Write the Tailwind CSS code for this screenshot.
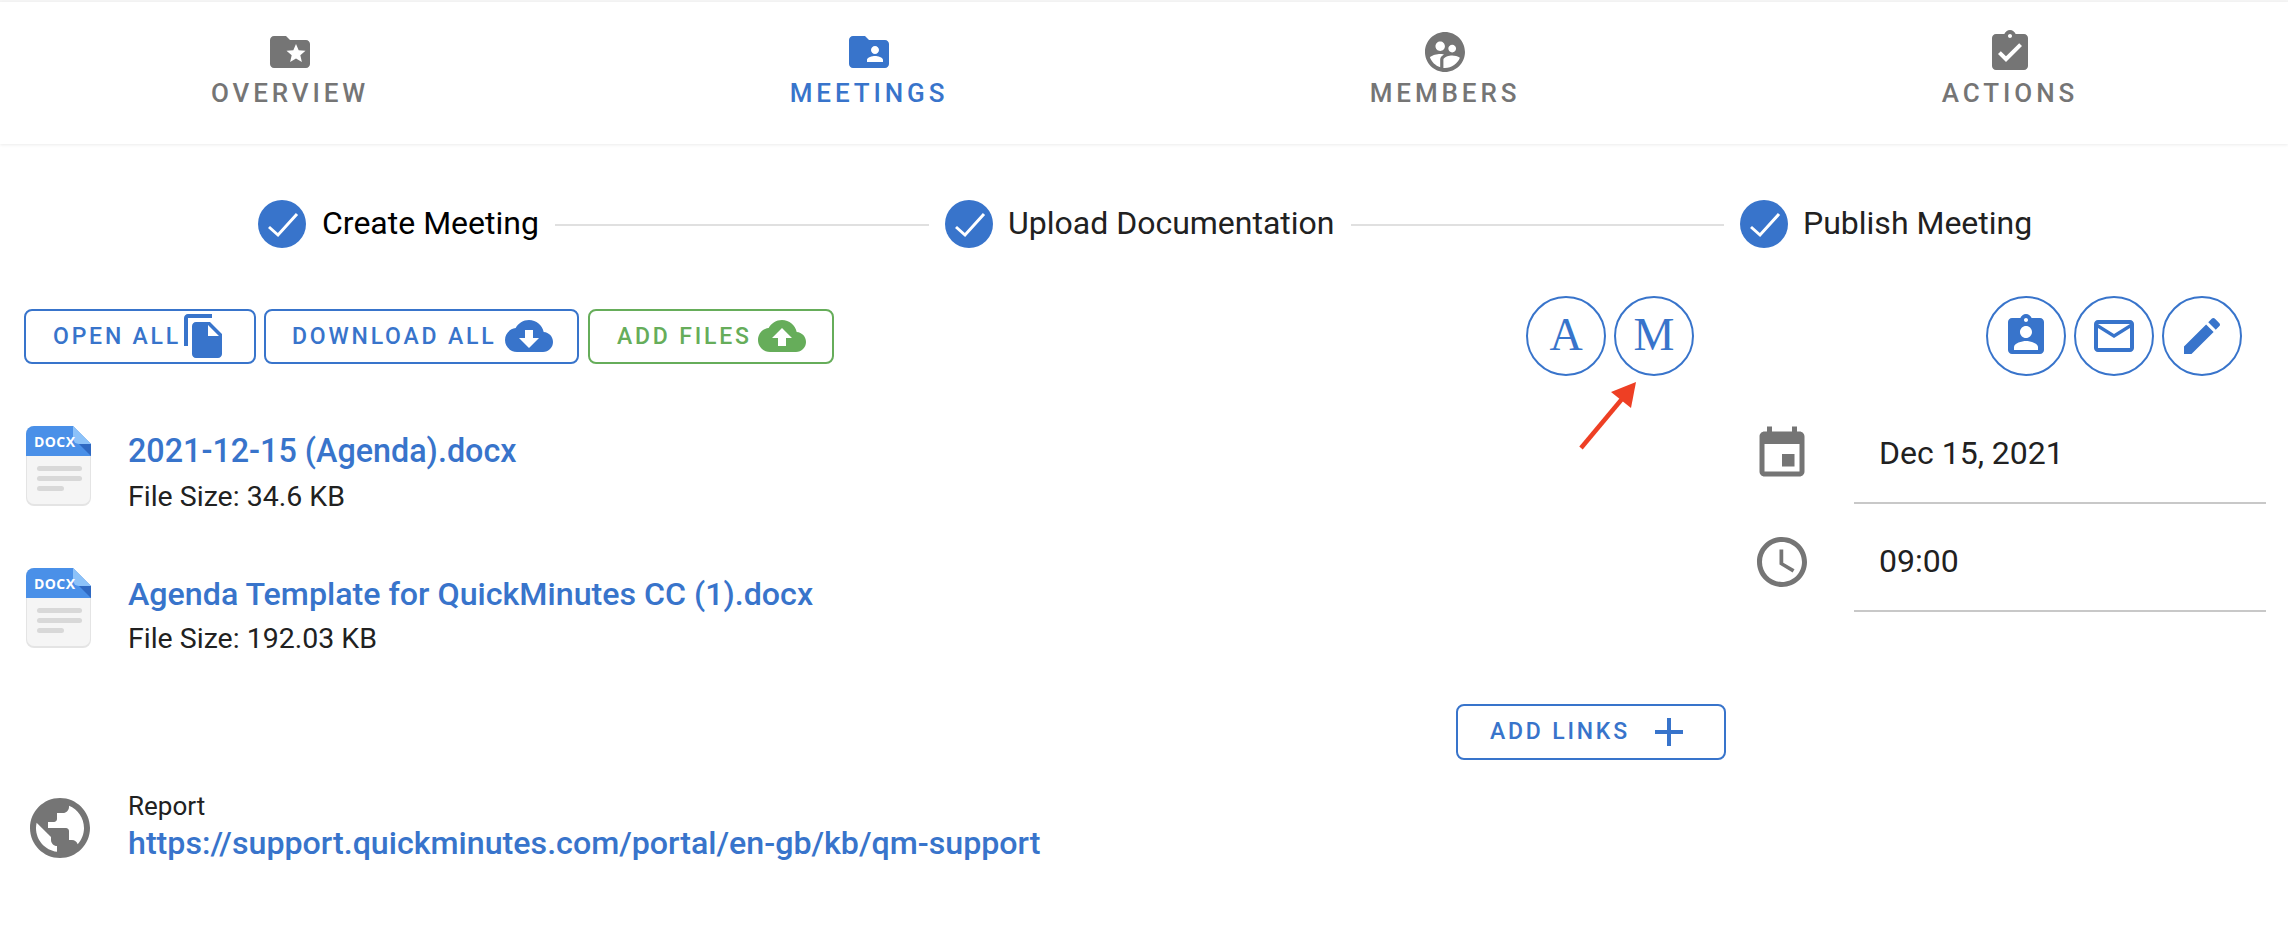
<!DOCTYPE html>
<html lang="en">
<head>
    <meta charset="UTF-8">
    <meta name="viewport" content="width=device-width, initial-scale=1.0">
    <title>Meeting</title>
    <script src="https://cdn.jsdelivr.net/npm/@tailwindcss/browser@4"></script>
</head>
<body class="bg-white text-black font-['Roboto',sans-serif] relative w-[2288px] h-[944px] overflow-hidden">

    <!-- Tabs -->
    <div class="h-[2px] bg-[#f5f5f5]"></div>
    <nav class="grid grid-cols-[580px_578px_574px_556px] h-[142px] pt-[26px] shadow-[0_1px_3px_rgba(0,0,0,0.08)] text-[26px] leading-[32px] tracking-[3.9px] font-medium text-[#757575]">
        <a class="flex flex-col items-center">
            <svg class="w-12 h-12 fill-current" viewBox="0 0 24 24"><path d="M20 6h-8l-2-2H4c-1.1 0-1.99.9-1.99 2L2 18c0 1.1.9 2 2 2h16c1.1 0 2-.9 2-2V8c0-1.1-.9-2-2-2zm-2.06 11L15 15.28 12.06 17l.78-3.33-2.59-2.24 3.41-.29L15 8l1.34 3.14 3.41.29-2.59 2.24.78 3.33z"/></svg>
            <span class="pt-px">OVERVIEW</span>
        </a>
        <a class="flex flex-col items-center text-[#3874cb]">
            <svg class="w-12 h-12 fill-current" viewBox="0 0 24 24"><path d="M20 6h-8l-2-2H4c-1.1 0-2 .9-2 2v12c0 1.1.9 2 2 2h16c1.1 0 2-.9 2-2V8c0-1.1-.9-2-2-2zm-5 3c1.1 0 2 .9 2 2s-.9 2-2 2-2-.9-2-2 .9-2 2-2zm4 8h-8v-1c0-1.33 2.67-2 4-2s4 .67 4 2v1z"/></svg>
            <span class="pt-px">MEETINGS</span>
        </a>
        <a class="flex flex-col items-center">
            <svg class="w-12 h-12 fill-current" viewBox="0 0 24 24"><path d="M11.99 2c-5.52 0-10 4.48-10 10s4.48 10 10 10 10-4.48 10-10-4.48-10-10-10zm3.61 6.34c1.07 0 1.93.86 1.93 1.93 0 1.07-.86 1.93-1.93 1.93-1.07 0-1.93-.86-1.93-1.93-.01-1.07.86-1.93 1.93-1.93zm-6-1.58c1.3 0 2.36 1.06 2.36 2.36 0 1.3-1.06 2.36-2.36 2.36s-2.36-1.06-2.36-2.36c0-1.31 1.05-2.36 2.36-2.36zm0 9.13v3.75c-2.4-.75-4.3-2.6-5.14-4.96 1.05-1.12 3.67-1.69 5.14-1.69.53 0 1.2.08 1.9.22-1.64.87-1.9 2.02-1.9 2.68zM11.99 20c-.27 0-.53-.01-.79-.04v-4.07c0-1.42 2.94-2.13 4.4-2.13 1.07 0 2.92.39 3.84 1.15-1.17 2.97-4.06 5.09-7.45 5.09z"/></svg>
            <span class="pt-px">MEMBERS</span>
        </a>
        <a class="flex flex-col items-center">
            <svg class="w-12 h-12 fill-current" viewBox="0 0 24 24"><path d="M19 3h-4.18C14.4 1.84 13.3 1 12 1c-1.3 0-2.4.84-2.82 2H5c-1.1 0-2 .9-2 2v14c0 1.1.9 2 2 2h14c1.1 0 2-.9 2-2V5c0-1.1-.9-2-2-2zm-7 0c.55 0 1 .45 1 1s-.45 1-1 1-1-.45-1-1 .45-1 1-1zm-2 14l-4-4 1.41-1.41L10 14.17l6.59-6.59L18 9l-8 8z"/></svg>
            <span class="pt-px">ACTIONS</span>
        </a>
    </nav>

    <!-- Stepper -->
    <div class="flex items-center mt-[56px] ml-[258px] h-12 text-[32px] text-[#212121]">
        <svg class="w-12 h-12 shrink-0" viewBox="0 0 48 48"><circle cx="24" cy="24" r="24" fill="#3874cb"/><path d="M11 27l9 8 19-21" fill="none" stroke="#fff" stroke-width="3"/></svg>
        <span class="ml-4 w-[217px] pb-[2px] whitespace-nowrap text-black">Create Meeting</span>
        <div class="ml-4 w-[374px] h-[2px] bg-[#e0e0e0] mt-[2px]"></div>
        <svg class="ml-4 w-12 h-12 shrink-0" viewBox="0 0 48 48"><circle cx="24" cy="24" r="24" fill="#3874cb"/><path d="M11 27l9 8 19-21" fill="none" stroke="#fff" stroke-width="3"/></svg>
        <span class="ml-[15px] w-[326px] pb-[2px] whitespace-nowrap">Upload Documentation</span>
        <div class="ml-[17px] w-[373px] h-[2px] bg-[#e0e0e0] mt-[2px]"></div>
        <svg class="ml-4 w-12 h-12 shrink-0" viewBox="0 0 48 48"><circle cx="24" cy="24" r="24" fill="#3874cb"/><path d="M11 27l9 8 19-21" fill="none" stroke="#fff" stroke-width="3"/></svg>
        <span class="ml-[15px] pb-[2px] whitespace-nowrap">Publish Meeting</span>
    </div>

    <div class="flex mt-[48px] pl-6">
        <!-- Files column -->
        <div class="w-[1702px] shrink-0">
            <div class="flex items-center justify-between h-20 pr-8">
                <div class="flex gap-2 text-[23px] tracking-[2.8px] font-medium text-[#3874cb]">
                    <a class="flex items-center w-[232px] h-[55px] pl-[27px] border-2 border-[#3874cb] rounded-lg whitespace-nowrap">
                        <span class="w-[127px] pt-[2px]">OPEN ALL</span>
                        <svg class="w-12 h-12 fill-current shrink-0" viewBox="0 0 24 24"><path d="M16 1H4c-1.1 0-2 .9-2 2v14h2V3h12V1zm-1 4l6 6v10c0 1.1-.9 2-2 2H7.99C6.89 23 6 22.1 6 21l.01-14c0-1.1.89-2 1.99-2h7zm-1 7h5.5L14 6.5V12z"/></svg>
                    </a>
                    <a class="flex items-center w-[315px] h-[55px] pl-[26px] border-2 border-[#3874cb] rounded-lg whitespace-nowrap">
                        <span class="w-[213px] pt-[2px]">DOWNLOAD ALL</span>
                        <svg class="w-12 h-12 fill-current shrink-0" viewBox="0 0 24 24"><path d="M19.35 10.04C18.67 6.59 15.64 4 12 4 9.11 4 6.6 5.64 5.35 8.04 2.34 8.36 0 10.91 0 14c0 3.31 2.69 6 6 6h13c2.76 0 5-2.24 5-5 0-2.64-2.05-4.78-4.65-4.96zM17 13l-5 5-5-5h3V9h4v4h3z"/></svg>
                    </a>
                    <a class="flex items-center w-[246px] h-[55px] ml-px pl-[27px] border-2 border-[#66ad5a] rounded-lg whitespace-nowrap text-[#66ad5a]">
                        <span class="w-[141px] pt-[2px]">ADD FILES</span>
                        <svg class="w-12 h-12 fill-current shrink-0" viewBox="0 0 24 24"><path d="M19.35 10.04C18.67 6.59 15.64 4 12 4 9.11 4 6.6 5.64 5.35 8.04 2.34 8.36 0 10.91 0 14c0 3.31 2.69 6 6 6h13c2.76 0 5-2.24 5-5 0-2.64-2.05-4.78-4.65-4.96zM14 13v4h-4v-4H7l5-5 5 5h-3z"/></svg>
                    </a>
                </div>
                <div class="flex gap-2 font-['Liberation_Serif',serif] text-[46px] text-[#3874cb]">
                    <div class="flex items-center justify-center w-20 h-20 border-2 border-[#3874cb] rounded-full pb-[4px]">A</div>
                    <div class="flex items-center justify-center w-20 h-20 border-2 border-[#3874cb] rounded-full pb-[4px]">M</div>
                </div>
            </div>

            <!-- Documents -->
            <div class="flex flex-col gap-[62px] mt-[50px] text-[28.5px] leading-[44px] text-[#212121]">
                <div class="flex h-20 ml-[2px]">
                    <svg class="w-[65px] h-20 shrink-0" viewBox="0 0 65 80">
                        <path d="M0 8a8 8 0 0 1 8-8H47L65 18V72a8 8 0 0 1-8 8H8a8 8 0 0 1-8-8Z" fill="#e4e4e4"/>
                        <path d="M1 30H64V71a7 7 0 0 1-7 7H8a7 7 0 0 1-7-7Z" fill="#f5f5f5"/>
                        <path d="M0 30V8a8 8 0 0 1 8-8H47L65 18V30Z" fill="#4a90e8"/>
                        <path d="M53 18H65V30Z" fill="#2f69c2"/>
                        <path d="M47 0L65 18H53a6 6 0 0 1-6-6Z" fill="#8cc2f9"/>
                        <rect x="11" y="40" width="45" height="5" rx="2.5" fill="#d8d8d8"/>
                        <rect x="11" y="50" width="45" height="5" rx="2.5" fill="#d8d8d8"/>
                        <rect x="11" y="60" width="27" height="5" rx="2.5" fill="#d8d8d8"/>
                        <text x="8" y="21" fill="#fff" font-family="Open Sans" font-weight="700" font-size="14" letter-spacing="0.4">DOCX</text>
                    </svg>
                    <div class="ml-[37px] pt-[3px]">
                        <a class="block text-[32.3px] font-medium text-[#3874cb] whitespace-nowrap">2021-12-15 (Agenda).docx</a>
                        <div class="mt-[2px]">File Size: 34.6 KB</div>
                    </div>
                </div>
                <div class="flex h-20 ml-[2px]">
                    <svg class="w-[65px] h-20 shrink-0" viewBox="0 0 65 80">
                        <path d="M0 8a8 8 0 0 1 8-8H47L65 18V72a8 8 0 0 1-8 8H8a8 8 0 0 1-8-8Z" fill="#e4e4e4"/>
                        <path d="M1 30H64V71a7 7 0 0 1-7 7H8a7 7 0 0 1-7-7Z" fill="#f5f5f5"/>
                        <path d="M0 30V8a8 8 0 0 1 8-8H47L65 18V30Z" fill="#4a90e8"/>
                        <path d="M53 18H65V30Z" fill="#2f69c2"/>
                        <path d="M47 0L65 18H53a6 6 0 0 1-6-6Z" fill="#8cc2f9"/>
                        <rect x="11" y="40" width="45" height="5" rx="2.5" fill="#d8d8d8"/>
                        <rect x="11" y="50" width="45" height="5" rx="2.5" fill="#d8d8d8"/>
                        <rect x="11" y="60" width="27" height="5" rx="2.5" fill="#d8d8d8"/>
                        <text x="8" y="21" fill="#fff" font-family="Open Sans" font-weight="700" font-size="14" letter-spacing="0.4">DOCX</text>
                    </svg>
                    <div class="ml-[37px] pt-[4px]">
                        <a class="block text-[32.2px] font-medium text-[#3874cb] whitespace-nowrap">Agenda Template for QuickMinutes CC (1).docx</a>
                        <div class="mt-[1px]">File Size: 192.03 KB</div>
                    </div>
                </div>
            </div>

            <!-- Links -->
            <div class="flex justify-end mt-[56px]">
                <a class="flex items-center w-[270px] h-14 pl-[32px] border-2 border-[#3874cb] rounded-lg text-[23px] tracking-[2.8px] font-medium text-[#3874cb] whitespace-nowrap">
                    <span class="w-[156px]">ADD LINKS</span>
                    <svg class="w-[28px] h-[28px] ml-[9px] shrink-0" viewBox="0 0 28 28"><path d="M12 0h4v12h12v4H16v12h-4V16H0v-4h12z" fill="currentColor"/></svg>
                </a>
            </div>
            <div class="flex gap-8 mt-[32px]">
                <svg class="w-[72px] h-[72px] shrink-0 fill-[#757575]" viewBox="0 0 24 24"><path d="M12 2C6.48 2 2 6.48 2 12s4.48 10 10 10 10-4.48 10-10S17.52 2 12 2zm-1 17.93c-3.95-.49-7-3.85-7-7.93 0-.62.08-1.21.21-1.79L9 15v1c0 1.1.9 2 2 2v1.93zm6.9-2.54c-.26-.81-1-1.39-1.9-1.39h-1v-3c0-.55-.45-1-1-1H8v-2h2c.55 0 1-.45 1-1V7h2c1.1 0 2-.9 2-2v-.41c2.93 1.19 5 4.06 5 7.41 0 2.08-.8 3.97-2.1 5.39z"/></svg>
                <div class="-mt-[2px]">
                    <div class="text-[26px] leading-[32px] text-[#212121]">Report</div>
                    <a class="block text-[32.2px] leading-[42px] font-medium text-[#3874cb] whitespace-nowrap">https://support.quickminutes.com/portal/en-gb/kb/qm-support</a>
                </div>
            </div>
        </div>

        <!-- Meeting details column -->
        <div class="ml-[26px] w-[514px] shrink-0">
            <div class="flex justify-end gap-2 h-20 pr-6 text-[#3874cb]">
                <div class="flex items-center justify-center w-20 h-20 border-2 border-[#3874cb] rounded-full">
                    <svg class="w-12 h-12 fill-current" viewBox="0 0 24 24"><path d="M19 3h-4.18C14.4 1.84 13.3 1 12 1c-1.3 0-2.4.84-2.82 2H5c-1.1 0-2 .9-2 2v14c0 1.1.9 2 2 2h14c1.1 0 2-.9 2-2V5c0-1.1-.9-2-2-2zm-7 0c.55 0 1 .45 1 1s-.45 1-1 1-1-.45-1-1 .45-1 1-1zm0 4c1.66 0 3 1.34 3 3s-1.34 3-3 3-3-1.34-3-3 1.34-3 3-3zm6 12H6v-1.4c0-2 4-3.1 6-3.1s6 1.1 6 3.1V19z"/></svg>
                </div>
                <div class="flex items-center justify-center w-20 h-20 border-2 border-[#3874cb] rounded-full">
                    <svg class="w-12 h-12 fill-current" viewBox="0 0 24 24"><path d="M20 4H4c-1.1 0-1.99.9-1.99 2L2 18c0 1.1.9 2 2 2h16c1.1 0 2-.9 2-2V6c0-1.1-.9-2-2-2zm0 14H4V8l8 5 8-5v10zm-8-7L4 6h16l-8 5z"/></svg>
                </div>
                <div class="flex items-center justify-center w-20 h-20 border-2 border-[#3874cb] rounded-full">
                    <svg class="w-12 h-12 fill-current" viewBox="0 0 24 24"><path d="M3 17.25V21h3.75L17.81 9.94l-3.75-3.75L3 17.25zM20.71 7.04c.39-.39.39-1.02 0-1.41l-2.34-2.34c-.39-.39-1.02-.39-1.41 0l-1.83 1.83 3.75 3.75 1.83-1.83z"/></svg>
                </div>
            </div>
            <div class="flex flex-col gap-[28px] mt-[48px] text-[32px] leading-[58px] text-[#212121]">
                <div class="flex gap-[42px]">
                    <svg class="w-[60px] h-[60px] shrink-0 fill-[#757575]" viewBox="0 0 24 24"><path d="M17 12h-5v5h5v-5zM16 1v2H8V1H6v2H5c-1.11 0-1.99.9-1.99 2L3 19c0 1.1.89 2 2 2h14c1.1 0 2-.9 2-2V5c0-1.1-.9-2-2-2h-1V1h-2zm3 18H5V8h14v11z"/></svg>
                    <div class="w-[412px] h-20 pl-[25px] border-b-2 border-[#c8c8c8]">Dec 15, 2021</div>
                </div>
                <div class="flex gap-[42px]">
                    <svg class="w-[60px] h-[60px] shrink-0 fill-[#757575]" viewBox="0 0 24 24"><path d="M11.99 2C6.47 2 2 6.48 2 12s4.47 10 9.99 10C17.52 22 22 17.52 22 12S17.52 2 11.99 2zM12 20c-4.42 0-8-3.58-8-8s3.58-8 8-8 8 3.58 8 8-3.58 8-8 8z"/><path d="M12.5 7H11v6l5.25 3.15.75-1.23-4.5-2.67z"/></svg>
                    <div class="w-[412px] h-20 pl-[25px] border-b-2 border-[#c8c8c8]">09:00</div>
                </div>
            </div>
        </div>
    </div>

    <!-- Annotation arrow -->
    <svg class="absolute left-[1570px] top-[375px] w-[75px] h-[80px]" viewBox="1570 375 75 80">
        <path d="M1581 448L1622 399" fill="none" stroke="#ee3f24" stroke-width="4.5"/>
        <path d="M1636 382L1611 392L1631 408Z" fill="#ee3f24"/>
    </svg>
</body>
</html>
